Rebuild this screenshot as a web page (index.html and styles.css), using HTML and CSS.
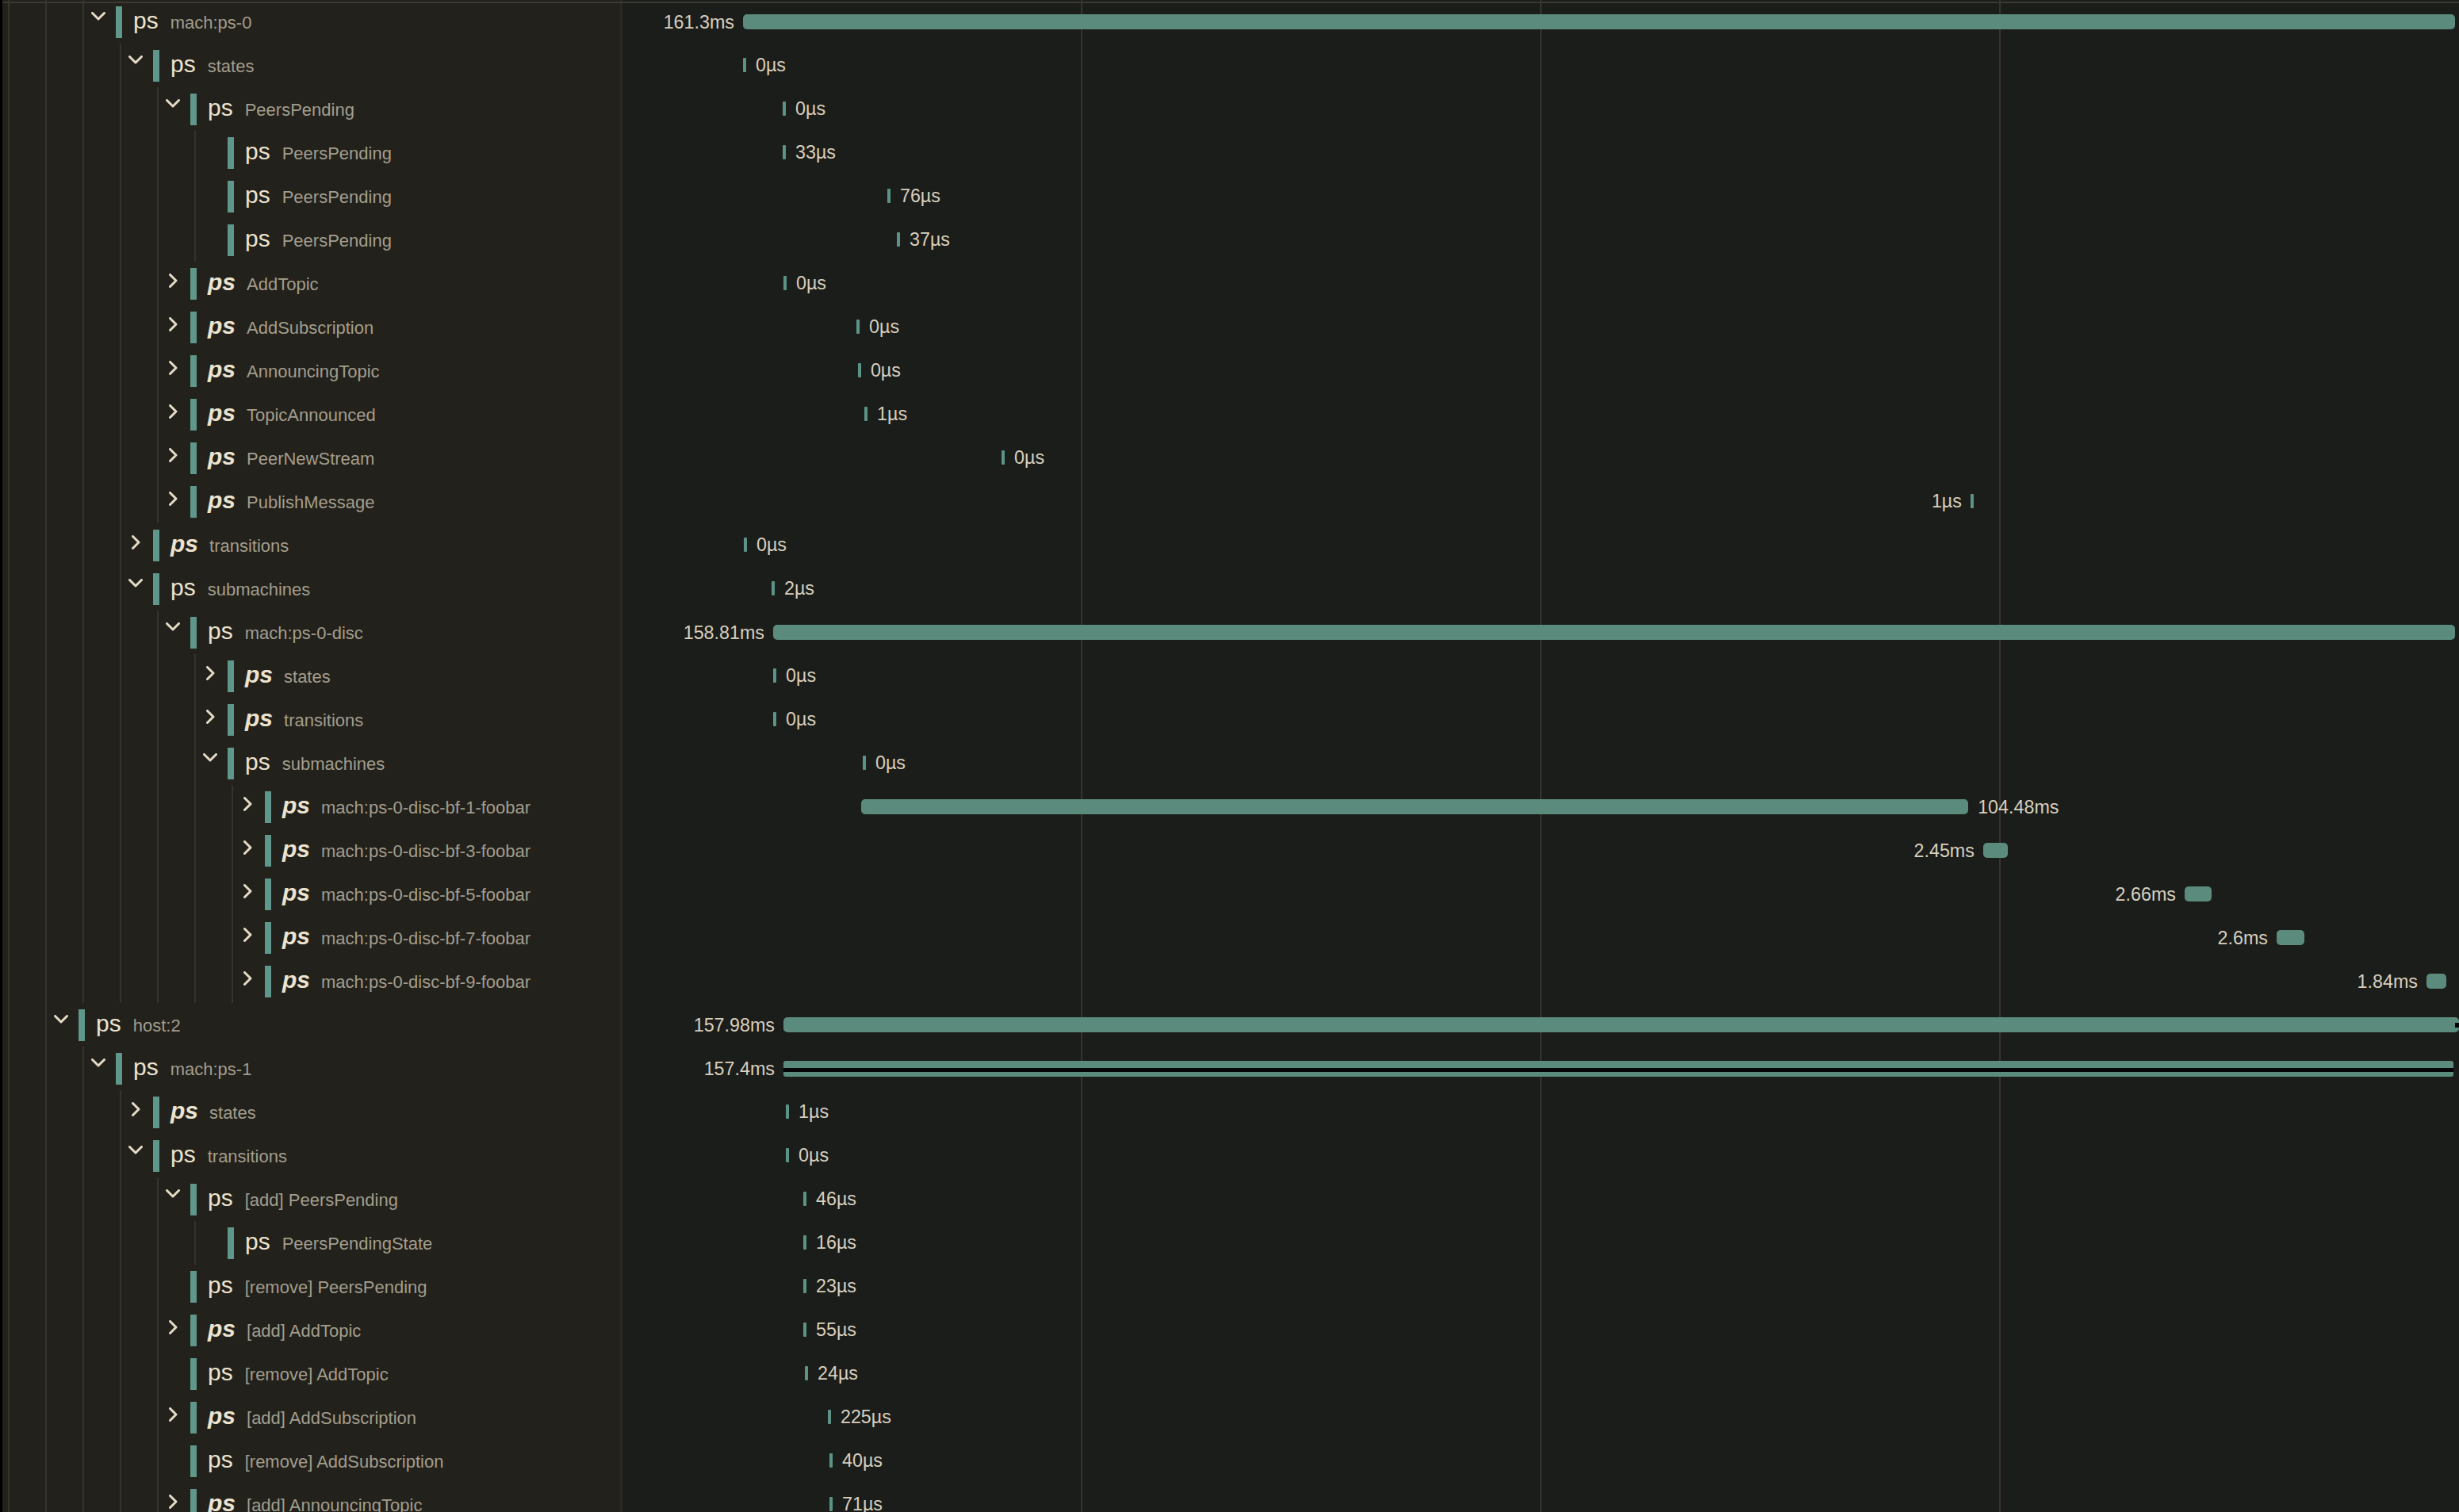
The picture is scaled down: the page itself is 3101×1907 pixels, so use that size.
FILE: index.html
```html
<!DOCTYPE html>
<html>
<head>
<meta charset="utf-8">
<title>Trace</title>
<link rel="stylesheet" href="styles.css">
</head>
<body>
<div class="view">

<div class="row"><div class="name-col"><span class="guide"></span><span class="guide"></span><div class="node"><span class="toggle"><svg class="chev-down" width="18" height="11" viewBox="0 0 18 11"><path d="M1.5 1.5L9 9L16.5 1.5"/></svg></span><span class="marker"></span><span class="name"><span class="svc">ps</span><span class="op">mach:ps-0</span></span></div></div><div class="tl-col"><div class="bar" style="left:6.563%;width:93.22%"><span class="dur dur-left">161.3ms</span></div></div></div>

<div class="row"><div class="name-col"><span class="guide"></span><span class="guide"></span><span class="guide"></span><div class="node"><span class="toggle"><svg class="chev-down" width="18" height="11" viewBox="0 0 18 11"><path d="M1.5 1.5L9 9L16.5 1.5"/></svg></span><span class="marker"></span><span class="name"><span class="svc">ps</span><span class="op">states</span></span></div></div><div class="tl-col"><div class="mark" style="left:6.563%"><span class="dur dur-right">0µs</span></div></div></div>

<div class="row"><div class="name-col"><span class="guide"></span><span class="guide"></span><span class="guide"></span><span class="guide"></span><div class="node"><span class="toggle"><svg class="chev-down" width="18" height="11" viewBox="0 0 18 11"><path d="M1.5 1.5L9 9L16.5 1.5"/></svg></span><span class="marker"></span><span class="name"><span class="svc">ps</span><span class="op">PeersPending</span></span></div></div><div class="tl-col"><div class="mark" style="left:8.722%"><span class="dur dur-right">0µs</span></div></div></div>

<div class="row"><div class="name-col"><span class="guide"></span><span class="guide"></span><span class="guide"></span><span class="guide"></span><span class="guide"></span><div class="node"><span class="toggle"></span><span class="marker"></span><span class="name"><span class="svc">ps</span><span class="op">PeersPending</span></span></div></div><div class="tl-col"><div class="mark" style="left:8.722%"><span class="dur dur-right">33µs</span></div></div></div>

<div class="row"><div class="name-col"><span class="guide"></span><span class="guide"></span><span class="guide"></span><span class="guide"></span><span class="guide"></span><div class="node"><span class="toggle"></span><span class="marker"></span><span class="name"><span class="svc">ps</span><span class="op">PeersPending</span></span></div></div><div class="tl-col"><div class="mark" style="left:14.42%"><span class="dur dur-right">76µs</span></div></div></div>

<div class="row"><div class="name-col"><span class="guide"></span><span class="guide"></span><span class="guide"></span><span class="guide"></span><span class="guide"></span><div class="node"><span class="toggle"></span><span class="marker"></span><span class="name"><span class="svc">ps</span><span class="op">PeersPending</span></span></div></div><div class="tl-col"><div class="mark" style="left:14.94%"><span class="dur dur-right">37µs</span></div></div></div>

<div class="row"><div class="name-col"><span class="guide"></span><span class="guide"></span><span class="guide"></span><span class="guide"></span><div class="node collapsed"><span class="toggle"><svg class="chev-right" width="11" height="18" viewBox="0 0 11 18"><path d="M1.5 1.5L9 9L1.5 16.5"/></svg></span><span class="marker"></span><span class="name"><span class="svc">ps</span><span class="op">AddTopic</span></span></div></div><div class="tl-col"><div class="mark" style="left:8.765%"><span class="dur dur-right">0µs</span></div></div></div>

<div class="row"><div class="name-col"><span class="guide"></span><span class="guide"></span><span class="guide"></span><span class="guide"></span><div class="node collapsed"><span class="toggle"><svg class="chev-right" width="11" height="18" viewBox="0 0 11 18"><path d="M1.5 1.5L9 9L1.5 16.5"/></svg></span><span class="marker"></span><span class="name"><span class="svc">ps</span><span class="op">AddSubscription</span></span></div></div><div class="tl-col"><div class="mark" style="left:12.74%"><span class="dur dur-right">0µs</span></div></div></div>

<div class="row"><div class="name-col"><span class="guide"></span><span class="guide"></span><span class="guide"></span><span class="guide"></span><div class="node collapsed"><span class="toggle"><svg class="chev-right" width="11" height="18" viewBox="0 0 11 18"><path d="M1.5 1.5L9 9L1.5 16.5"/></svg></span><span class="marker"></span><span class="name"><span class="svc">ps</span><span class="op">AnnouncingTopic</span></span></div></div><div class="tl-col"><div class="mark" style="left:12.82%"><span class="dur dur-right">0µs</span></div></div></div>

<div class="row"><div class="name-col"><span class="guide"></span><span class="guide"></span><span class="guide"></span><span class="guide"></span><div class="node collapsed"><span class="toggle"><svg class="chev-right" width="11" height="18" viewBox="0 0 11 18"><path d="M1.5 1.5L9 9L1.5 16.5"/></svg></span><span class="marker"></span><span class="name"><span class="svc">ps</span><span class="op">TopicAnnounced</span></span></div></div><div class="tl-col"><div class="mark" style="left:13.17%"><span class="dur dur-right">1µs</span></div></div></div>

<div class="row"><div class="name-col"><span class="guide"></span><span class="guide"></span><span class="guide"></span><span class="guide"></span><div class="node collapsed"><span class="toggle"><svg class="chev-right" width="11" height="18" viewBox="0 0 11 18"><path d="M1.5 1.5L9 9L1.5 16.5"/></svg></span><span class="marker"></span><span class="name"><span class="svc">ps</span><span class="op">PeerNewStream</span></span></div></div><div class="tl-col"><div class="mark" style="left:20.64%"><span class="dur dur-right">0µs</span></div></div></div>

<div class="row"><div class="name-col"><span class="guide"></span><span class="guide"></span><span class="guide"></span><span class="guide"></span><div class="node collapsed"><span class="toggle"><svg class="chev-right" width="11" height="18" viewBox="0 0 11 18"><path d="M1.5 1.5L9 9L1.5 16.5"/></svg></span><span class="marker"></span><span class="name"><span class="svc">ps</span><span class="op">PublishMessage</span></span></div></div><div class="tl-col"><div class="mark" style="left:73.40%"><span class="dur dur-left">1µs</span></div></div></div>

<div class="row"><div class="name-col"><span class="guide"></span><span class="guide"></span><span class="guide"></span><div class="node collapsed"><span class="toggle"><svg class="chev-right" width="11" height="18" viewBox="0 0 11 18"><path d="M1.5 1.5L9 9L1.5 16.5"/></svg></span><span class="marker"></span><span class="name"><span class="svc">ps</span><span class="op">transitions</span></span></div></div><div class="tl-col"><div class="mark" style="left:6.606%"><span class="dur dur-right">0µs</span></div></div></div>

<div class="row"><div class="name-col"><span class="guide"></span><span class="guide"></span><span class="guide"></span><div class="node"><span class="toggle"><svg class="chev-down" width="18" height="11" viewBox="0 0 18 11"><path d="M1.5 1.5L9 9L16.5 1.5"/></svg></span><span class="marker"></span><span class="name"><span class="svc">ps</span><span class="op">submachines</span></span></div></div><div class="tl-col"><div class="mark" style="left:8.117%"><span class="dur dur-right">2µs</span></div></div></div>

<div class="row"><div class="name-col"><span class="guide"></span><span class="guide"></span><span class="guide"></span><span class="guide"></span><div class="node"><span class="toggle"><svg class="chev-down" width="18" height="11" viewBox="0 0 18 11"><path d="M1.5 1.5L9 9L16.5 1.5"/></svg></span><span class="marker"></span><span class="name"><span class="svc">ps</span><span class="op">mach:ps-0-disc</span></span></div></div><div class="tl-col"><div class="bar" style="left:8.204%;width:91.58%"><span class="dur dur-left">158.81ms</span></div></div></div>

<div class="row"><div class="name-col"><span class="guide"></span><span class="guide"></span><span class="guide"></span><span class="guide"></span><span class="guide"></span><div class="node collapsed"><span class="toggle"><svg class="chev-right" width="11" height="18" viewBox="0 0 11 18"><path d="M1.5 1.5L9 9L1.5 16.5"/></svg></span><span class="marker"></span><span class="name"><span class="svc">ps</span><span class="op">states</span></span></div></div><div class="tl-col"><div class="mark" style="left:8.204%"><span class="dur dur-right">0µs</span></div></div></div>

<div class="row"><div class="name-col"><span class="guide"></span><span class="guide"></span><span class="guide"></span><span class="guide"></span><span class="guide"></span><div class="node collapsed"><span class="toggle"><svg class="chev-right" width="11" height="18" viewBox="0 0 11 18"><path d="M1.5 1.5L9 9L1.5 16.5"/></svg></span><span class="marker"></span><span class="name"><span class="svc">ps</span><span class="op">transitions</span></span></div></div><div class="tl-col"><div class="mark" style="left:8.204%"><span class="dur dur-right">0µs</span></div></div></div>

<div class="row"><div class="name-col"><span class="guide"></span><span class="guide"></span><span class="guide"></span><span class="guide"></span><span class="guide"></span><div class="node"><span class="toggle"><svg class="chev-down" width="18" height="11" viewBox="0 0 18 11"><path d="M1.5 1.5L9 9L16.5 1.5"/></svg></span><span class="marker"></span><span class="name"><span class="svc">ps</span><span class="op">submachines</span></span></div></div><div class="tl-col"><div class="mark" style="left:13.08%"><span class="dur dur-right">0µs</span></div></div></div>

<div class="row"><div class="name-col"><span class="guide"></span><span class="guide"></span><span class="guide"></span><span class="guide"></span><span class="guide"></span><span class="guide"></span><div class="node collapsed"><span class="toggle"><svg class="chev-right" width="11" height="18" viewBox="0 0 11 18"><path d="M1.5 1.5L9 9L1.5 16.5"/></svg></span><span class="marker"></span><span class="name"><span class="svc">ps</span><span class="op">mach:ps-0-disc-bf-1-foobar</span></span></div></div><div class="tl-col"><div class="bar" style="left:13.00%;width:60.28%"><span class="dur dur-right">104.48ms</span></div></div></div>

<div class="row"><div class="name-col"><span class="guide"></span><span class="guide"></span><span class="guide"></span><span class="guide"></span><span class="guide"></span><span class="guide"></span><div class="node collapsed"><span class="toggle"><svg class="chev-right" width="11" height="18" viewBox="0 0 11 18"><path d="M1.5 1.5L9 9L1.5 16.5"/></svg></span><span class="marker"></span><span class="name"><span class="svc">ps</span><span class="op">mach:ps-0-disc-bf-3-foobar</span></span></div></div><div class="tl-col"><div class="bar" style="left:74.09%;width:1.34%"><span class="dur dur-left">2.45ms</span></div></div></div>

<div class="row"><div class="name-col"><span class="guide"></span><span class="guide"></span><span class="guide"></span><span class="guide"></span><span class="guide"></span><span class="guide"></span><div class="node collapsed"><span class="toggle"><svg class="chev-right" width="11" height="18" viewBox="0 0 11 18"><path d="M1.5 1.5L9 9L1.5 16.5"/></svg></span><span class="marker"></span><span class="name"><span class="svc">ps</span><span class="op">mach:ps-0-disc-bf-5-foobar</span></span></div></div><div class="tl-col"><div class="bar" style="left:85.06%;width:1.47%"><span class="dur dur-left">2.66ms</span></div></div></div>

<div class="row"><div class="name-col"><span class="guide"></span><span class="guide"></span><span class="guide"></span><span class="guide"></span><span class="guide"></span><span class="guide"></span><div class="node collapsed"><span class="toggle"><svg class="chev-right" width="11" height="18" viewBox="0 0 11 18"><path d="M1.5 1.5L9 9L1.5 16.5"/></svg></span><span class="marker"></span><span class="name"><span class="svc">ps</span><span class="op">mach:ps-0-disc-bf-7-foobar</span></span></div></div><div class="tl-col"><div class="bar" style="left:90.07%;width:1.51%"><span class="dur dur-left">2.6ms</span></div></div></div>

<div class="row"><div class="name-col"><span class="guide"></span><span class="guide"></span><span class="guide"></span><span class="guide"></span><span class="guide"></span><span class="guide"></span><div class="node collapsed"><span class="toggle"><svg class="chev-right" width="11" height="18" viewBox="0 0 11 18"><path d="M1.5 1.5L9 9L1.5 16.5"/></svg></span><span class="marker"></span><span class="name"><span class="svc">ps</span><span class="op">mach:ps-0-disc-bf-9-foobar</span></span></div></div><div class="tl-col"><div class="bar" style="left:98.23%;width:1.08%"><span class="dur dur-left">1.84ms</span></div></div></div>

<div class="row"><div class="name-col"><span class="guide"></span><div class="node"><span class="toggle"><svg class="chev-down" width="18" height="11" viewBox="0 0 18 11"><path d="M1.5 1.5L9 9L16.5 1.5"/></svg></span><span class="marker"></span><span class="name"><span class="svc">ps</span><span class="op">host:2</span></span></div></div><div class="tl-col"><div class="bar notch" style="left:8.765%;width:91.24%"><span class="dur dur-left">157.98ms</span></div></div></div>

<div class="row"><div class="name-col"><span class="guide"></span><span class="guide"></span><div class="node"><span class="toggle"><svg class="chev-down" width="18" height="11" viewBox="0 0 18 11"><path d="M1.5 1.5L9 9L16.5 1.5"/></svg></span><span class="marker"></span><span class="name"><span class="svc">ps</span><span class="op">mach:ps-1</span></span></div></div><div class="tl-col"><div class="bar split" style="left:8.765%;width:90.93%"><span class="dur dur-left">157.4ms</span></div></div></div>

<div class="row"><div class="name-col"><span class="guide"></span><span class="guide"></span><span class="guide"></span><div class="node collapsed"><span class="toggle"><svg class="chev-right" width="11" height="18" viewBox="0 0 11 18"><path d="M1.5 1.5L9 9L1.5 16.5"/></svg></span><span class="marker"></span><span class="name"><span class="svc">ps</span><span class="op">states</span></span></div></div><div class="tl-col"><div class="mark" style="left:8.895%"><span class="dur dur-right">1µs</span></div></div></div>

<div class="row"><div class="name-col"><span class="guide"></span><span class="guide"></span><span class="guide"></span><div class="node"><span class="toggle"><svg class="chev-down" width="18" height="11" viewBox="0 0 18 11"><path d="M1.5 1.5L9 9L16.5 1.5"/></svg></span><span class="marker"></span><span class="name"><span class="svc">ps</span><span class="op">transitions</span></span></div></div><div class="tl-col"><div class="mark" style="left:8.895%"><span class="dur dur-right">0µs</span></div></div></div>

<div class="row"><div class="name-col"><span class="guide"></span><span class="guide"></span><span class="guide"></span><span class="guide"></span><div class="node"><span class="toggle"><svg class="chev-down" width="18" height="11" viewBox="0 0 18 11"><path d="M1.5 1.5L9 9L16.5 1.5"/></svg></span><span class="marker"></span><span class="name"><span class="svc">ps</span><span class="op">[add] PeersPending</span></span></div></div><div class="tl-col"><div class="mark" style="left:9.845%"><span class="dur dur-right">46µs</span></div></div></div>

<div class="row"><div class="name-col"><span class="guide"></span><span class="guide"></span><span class="guide"></span><span class="guide"></span><span class="guide"></span><div class="node"><span class="toggle"></span><span class="marker"></span><span class="name"><span class="svc">ps</span><span class="op">PeersPendingState</span></span></div></div><div class="tl-col"><div class="mark" style="left:9.845%"><span class="dur dur-right">16µs</span></div></div></div>

<div class="row"><div class="name-col"><span class="guide"></span><span class="guide"></span><span class="guide"></span><span class="guide"></span><div class="node"><span class="toggle"></span><span class="marker"></span><span class="name"><span class="svc">ps</span><span class="op">[remove] PeersPending</span></span></div></div><div class="tl-col"><div class="mark" style="left:9.845%"><span class="dur dur-right">23µs</span></div></div></div>

<div class="row"><div class="name-col"><span class="guide"></span><span class="guide"></span><span class="guide"></span><span class="guide"></span><div class="node collapsed"><span class="toggle"><svg class="chev-right" width="11" height="18" viewBox="0 0 11 18"><path d="M1.5 1.5L9 9L1.5 16.5"/></svg></span><span class="marker"></span><span class="name"><span class="svc">ps</span><span class="op">[add] AddTopic</span></span></div></div><div class="tl-col"><div class="mark" style="left:9.845%"><span class="dur dur-right">55µs</span></div></div></div>

<div class="row"><div class="name-col"><span class="guide"></span><span class="guide"></span><span class="guide"></span><span class="guide"></span><div class="node"><span class="toggle"></span><span class="marker"></span><span class="name"><span class="svc">ps</span><span class="op">[remove] AddTopic</span></span></div></div><div class="tl-col"><div class="mark" style="left:9.931%"><span class="dur dur-right">24µs</span></div></div></div>

<div class="row"><div class="name-col"><span class="guide"></span><span class="guide"></span><span class="guide"></span><span class="guide"></span><div class="node collapsed"><span class="toggle"><svg class="chev-right" width="11" height="18" viewBox="0 0 11 18"><path d="M1.5 1.5L9 9L1.5 16.5"/></svg></span><span class="marker"></span><span class="name"><span class="svc">ps</span><span class="op">[add] AddSubscription</span></span></div></div><div class="tl-col"><div class="mark" style="left:11.18%"><span class="dur dur-right">225µs</span></div></div></div>

<div class="row"><div class="name-col"><span class="guide"></span><span class="guide"></span><span class="guide"></span><span class="guide"></span><div class="node"><span class="toggle"></span><span class="marker"></span><span class="name"><span class="svc">ps</span><span class="op">[remove] AddSubscription</span></span></div></div><div class="tl-col"><div class="mark" style="left:11.27%"><span class="dur dur-right">40µs</span></div></div></div>

<div class="row"><div class="name-col"><span class="guide"></span><span class="guide"></span><span class="guide"></span><span class="guide"></span><div class="node collapsed"><span class="toggle"><svg class="chev-right" width="11" height="18" viewBox="0 0 11 18"><path d="M1.5 1.5L9 9L1.5 16.5"/></svg></span><span class="marker"></span><span class="name"><span class="svc">ps</span><span class="op">[add] AnnouncingTopic</span></span></div></div><div class="tl-col"><div class="mark" style="left:11.27%"><span class="dur dur-right">71µs</span></div></div></div>

</div>
</body>
</html>
```

FILE: styles.css
```css
* { box-sizing: border-box; }
html, body {
  margin: 0;
  padding: 0;
  background: #1b1d1a;
}
body {
  width: 3101px;
  height: 1907px;
  overflow: hidden;
  font-family: "Liberation Sans", Arial, sans-serif;
}
.view {
  position: relative;
  width: 3101px;
  border-left: 3px solid #000;
}
.view::before {
  content: "";
  position: absolute;
  left: 0;
  right: 0;
  top: 2px;
  height: 2px;
  background: #3a3932;
  z-index: 3;
}
.row {
  display: flex;
  height: 55px;
}
.name-col {
  width: 782px;
  flex: none;
  display: flex;
  background: #22211b;
  border-right: 3px solid #2b2921;
  padding-left: 7px;
}
.guide {
  width: 47px;
  flex: none;
  height: 100%;
  border-left: 2px solid #35342c;
}
.node {
  flex: 1;
  min-width: 0;
  display: flex;
  align-items: center;
  border-left: 2px solid #35342c;
}
.toggle {
  width: 36px;
  height: 100%;
  flex: none;
  display: flex;
  align-items: center;
  justify-content: center;
  color: #e4dbc6;
}
.toggle svg path {
  fill: none;
  stroke: currentColor;
  stroke-width: 3;
  stroke-linecap: round;
  stroke-linejoin: round;
}
.chev-down { margin-bottom: 14px; }
.chev-right { margin-bottom: 7px; }
.marker {
  width: 8px;
  height: 40px;
  flex: none;
  margin-left: 4px;
  background: #5f978b;
}
.name {
  display: flex;
  align-items: baseline;
  padding-bottom: 3px;
  white-space: nowrap;
}
.svc {
  font-size: 30px;
  line-height: 1;
  color: #ece3cf;
  margin-left: 14px;
}
.collapsed .svc {
  font-style: italic;
  font-weight: bold;
}
.op {
  font-size: 22px;
  color: #a39d8d;
  margin-left: 15px;
}
.collapsed .op {
  margin-left: 14px;
}
.tl-col {
  flex: 1;
  position: relative;
  background-color: #1b1d1a;
  background-image:
    linear-gradient(to right, transparent calc(25% - 1px), #37322f calc(25% - 1px), #37322f calc(25% + 1px), transparent calc(25% + 1px)),
    linear-gradient(to right, transparent calc(50% - 1px), #37322f calc(50% - 1px), #37322f calc(50% + 1px), transparent calc(50% + 1px)),
    linear-gradient(to right, transparent calc(75% - 1px), #37322f calc(75% - 1px), #37322f calc(75% + 1px), transparent calc(75% + 1px));
}
.bar {
  position: absolute;
  top: 18px;
  height: 19px;
  background: #5b8b7c;
  border-radius: 5px;
}
.bar.split {
  height: 20px;
  border-radius: 3px;
  background: linear-gradient(#5b8b7c 0 9px, #050505 9px 14px, #5b8b7c 14px 20px);
}
.bar.notch::after {
  content: "";
  position: absolute;
  right: 0;
  top: 7px;
  width: 5px;
  height: 6px;
  background: #000;
}
.mark {
  position: absolute;
  top: 18px;
  width: 4px;
  height: 18px;
  background: #5b9486;
  border-radius: 1px;
}
.dur {
  position: absolute;
  top: calc(50% + 1px);
  transform: translateY(-50%);
  font-size: 23.3px;
  line-height: 1;
  color: #d8cfbe;
  white-space: nowrap;
}
.dur-left { right: calc(100% + 11px); }
.dur-right { left: calc(100% + 12px); }
```
